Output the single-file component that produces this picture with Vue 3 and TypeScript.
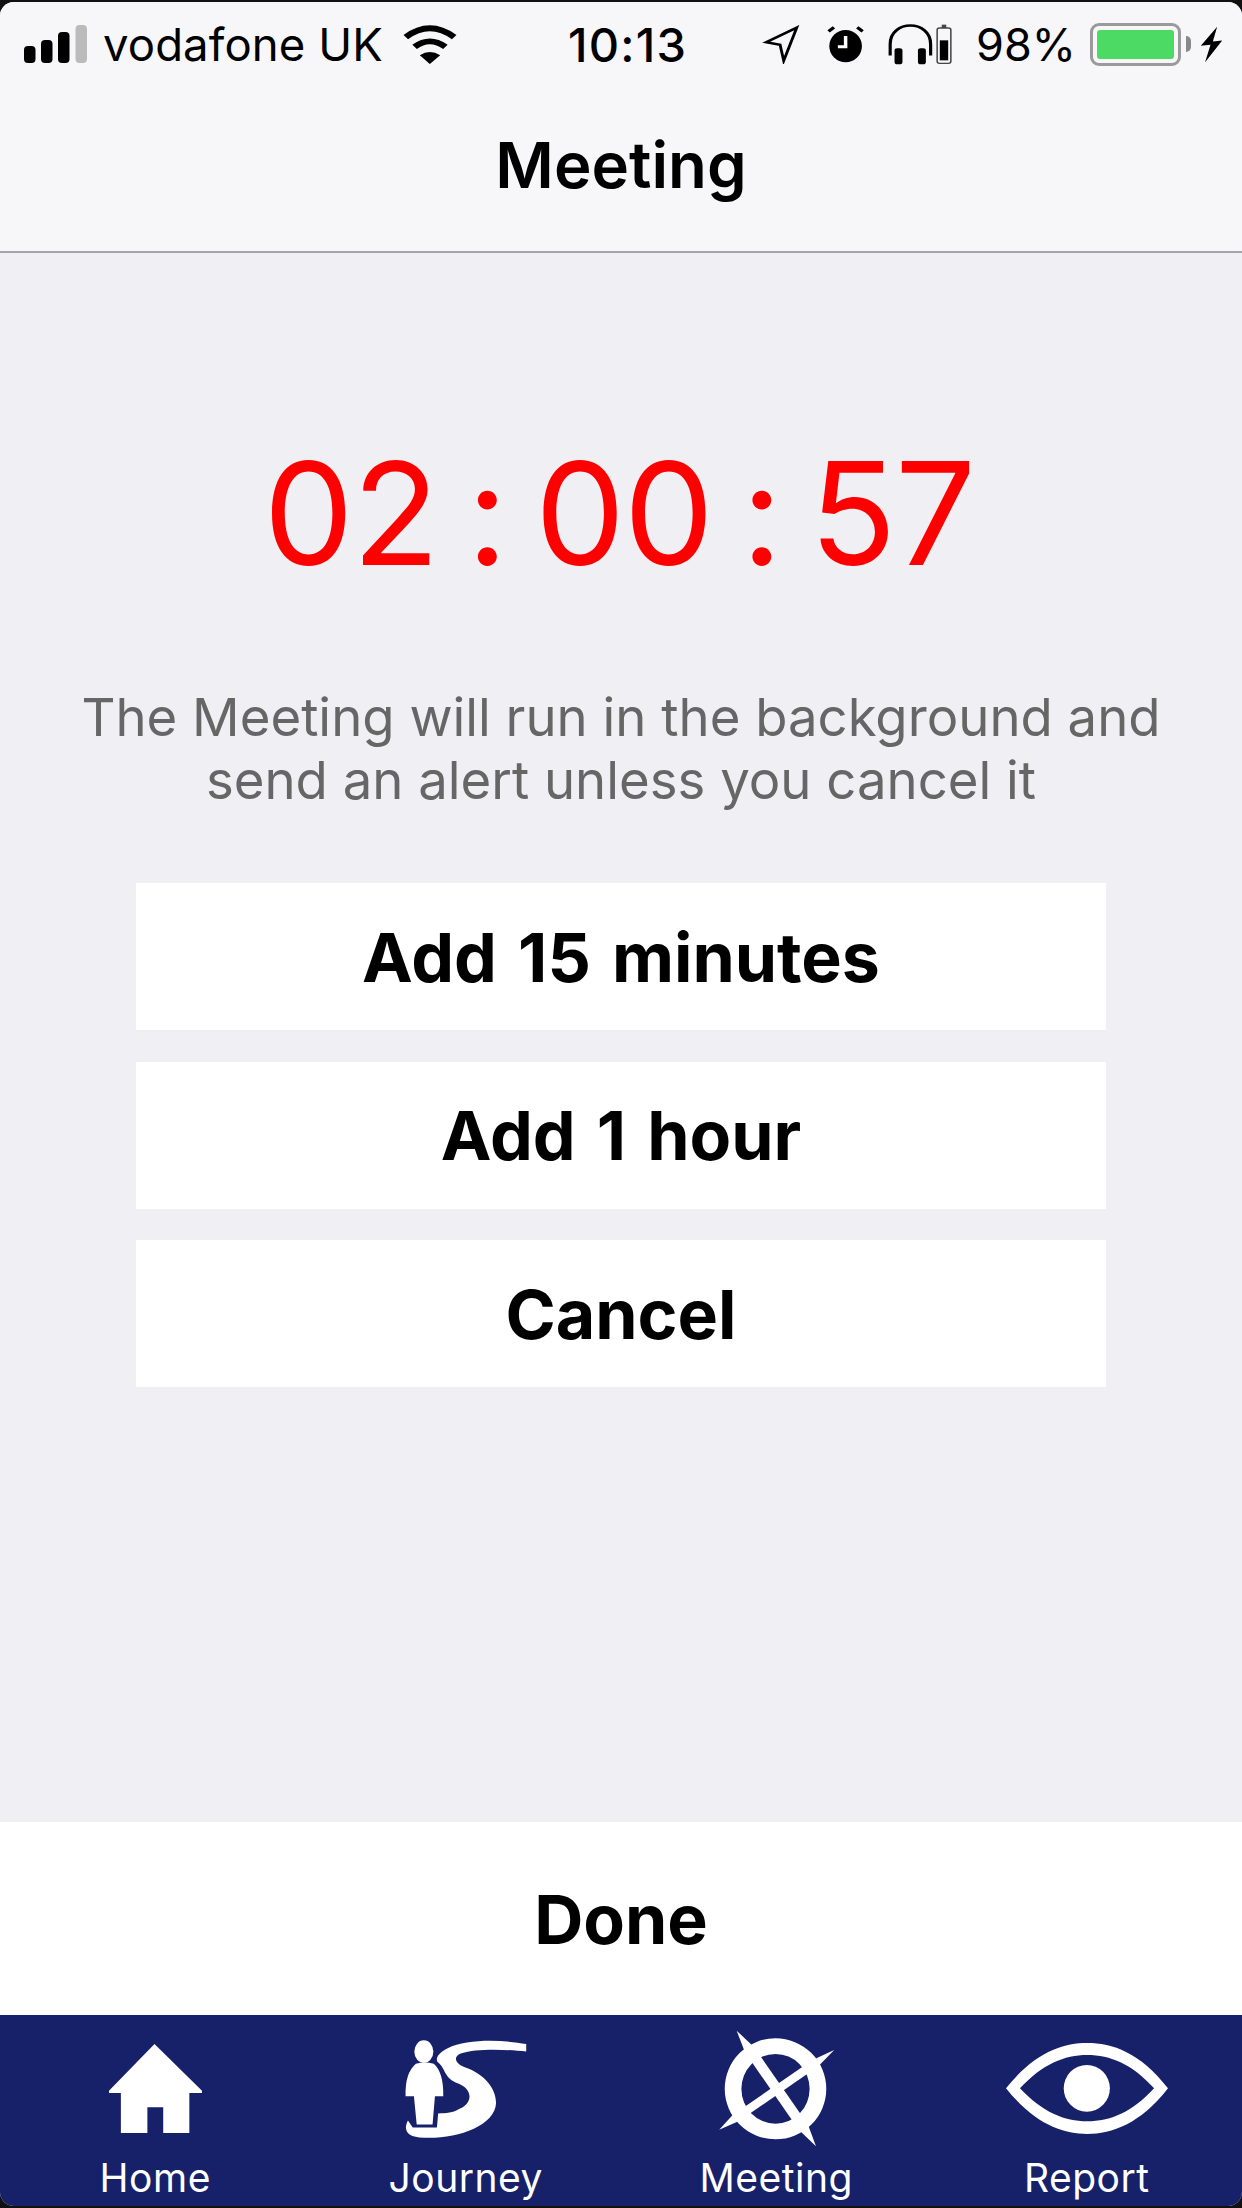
<template>
  <div class="screen">
    <header class="top">
      <div class="status-bar">
        <div class="status-left">
          <svg class="signal" viewBox="0 0 63 38" width="63" height="38">
            <rect v-for="bar in signalBars" :key="bar.x" :x="bar.x" :y="bar.y" width="11.5" :height="38 - bar.y" rx="4" :fill="bar.fill" />
          </svg>
          <span class="carrier">vodafone UK</span>
          <svg class="wifi" viewBox="1025 62 135 122" width="54" height="40" preserveAspectRatio="none">
            <path d="M1032 102 Q1092 48 1153 102" fill="none" stroke="#000" stroke-width="17" />
            <path d="M1054 132 Q1092 98 1131 132" fill="none" stroke="#000" stroke-width="17" />
            <path d="M1067 157 Q1092 138 1118 157 L1092 184 Z" />
          </svg>
        </div>
        <span class="clock">10:13</span>
        <div class="status-right">
          <svg class="ic-location" viewBox="360 68 105 118" width="38" height="39" preserveAspectRatio="none">
            <path d="M456 76 L372 120 L410 128 L420 176 Z" fill="none" stroke="#000" stroke-width="8" stroke-linejoin="miter" />
          </svg>
          <svg class="ic-alarm" viewBox="522 68 98 110" width="38" height="37" preserveAspectRatio="none">
            <ellipse cx="570" cy="128" rx="42" ry="48" />
            <path d="M526 84 L540 72 M614 84 L600 72" stroke="#000" stroke-width="9" />
            <path d="M570 98 V130 H550" fill="none" stroke="#fff" stroke-width="9" />
          </svg>
          <svg class="ic-phones" viewBox="672 62 116 122" width="46" height="41" preserveAspectRatio="none">
            <path d="M680 156 V122 C680 48 782 48 782 122 V156" fill="none" stroke="#000" stroke-width="8" />
            <rect x="691" y="134" width="20" height="48" rx="7" />
            <rect x="750" y="134" width="20" height="48" rx="7" />
          </svg>
          <svg class="ic-cell" viewBox="793 63 42 120" width="16" height="40" preserveAspectRatio="none">
            <rect x="796" y="75" width="36" height="106" rx="6" fill="none" stroke="#444" stroke-width="4" />
            <rect x="808" y="65" width="12" height="10" fill="#444" />
            <rect x="803" y="112" width="22" height="60" />
          </svg>
          <span class="percent">98%</span>
          <div class="battery"><div class="battery-fill"></div></div>
          <div class="battery-nub"></div>
          <svg class="ic-bolt" viewBox="1463 68 59 112" width="23" height="37" preserveAspectRatio="none">
            <path d="M1507 70 L1465 128 L1490 125 L1476 178 L1520 112 L1496 115 Z" />
          </svg>
        </div>
      </div>
      <h1 class="title">Meeting</h1>
    </header>

    <main class="content">
      <div class="timer">02 : 00 : 57</div>
      <p class="note">The Meeting will run in the background and<br />send an alert unless you cancel it</p>
      <div class="actions">
        <button v-for="label in actions" :key="label" class="action">{{ label }}</button>
      </div>
    </main>

    <button class="done">Done</button>

    <nav class="tabs">
      <div class="tab">
        <div class="tab-icon">
          <svg viewBox="275 165 235 267" width="93" height="89" preserveAspectRatio="none">
            <path fill="#fff" d="M390 165 L510 305 V312 H478 V432 H412 V355 H372 V432 H305 V312 H275 V305 Z" />
          </svg>
        </div>
        <span>Home</span>
      </div>
      <div class="tab">
        <div class="tab-icon">
          <svg viewBox="1020 150 310 296" width="123" height="98" preserveAspectRatio="none">
            <ellipse cx="1070" cy="185" rx="24" ry="34" fill="#fff" />
            <path fill="#fff" d="M1050 222 Q1072 212 1095 222 Q1120 248 1119 320 H1098 L1092 405 H1052 L1045 320 H1024 Q1022 250 1050 222 Z" />
            <path fill="#fff" d="M1328 162 C1270 150 1180 145 1130 175 C1105 190 1100 205 1104 216 C1125 235 1120 262 1150 278 C1195 295 1195 340 1160 358 C1145 370 1125 372 1106 372 L1103 414 H1042 L1030 393 C1018 420 1025 445 1070 445 C1150 450 1250 410 1252 340 C1252 290 1215 250 1180 235 C1150 225 1140 200 1165 190 C1200 175 1280 178 1328 185 Z" />
          </svg>
        </div>
        <span>Journey</span>
      </div>
      <div class="tab">
        <div class="tab-icon">
          <svg viewBox="245 120 295 352" width="117" height="117" preserveAspectRatio="none">
            <path fill="#fff" fill-rule="evenodd" d="M262 297 A128 152 0 1 0 518 297 A128 152 0 1 0 262 297 Z M304 297 A86 105 0 1 1 476 297 A86 105 0 1 1 304 297 Z" />
            <path fill="#fff" d="M292 122 L337 173 L472 405 L492 470 L448 419 L313 187 Z" />
            <path fill="#fff" d="M538 180 L498 229 L298 394 L248 420 L282 376 L482 211 Z" />
          </svg>
        </div>
        <span>Meeting</span>
      </div>
      <div class="tab">
        <div class="tab-icon">
          <svg viewBox="968 162 407 273" width="162" height="91" preserveAspectRatio="none">
            <path fill="#fff" fill-rule="evenodd" d="M968 298 C1040 190 1110 162 1172 162 C1235 162 1305 190 1375 298 C1305 405 1235 435 1172 435 C1110 435 1040 405 968 298 Z M1003 298 C1060 225 1115 198 1172 198 C1230 198 1285 225 1340 298 C1285 370 1230 397 1172 397 C1115 397 1060 370 1003 298 Z" />
            <ellipse cx="1171" cy="298" rx="58" ry="70" fill="#fff" />
          </svg>
        </div>
        <span>Report</span>
      </div>
    </nav>
  </div>
</template>

<script setup lang="ts">
const signalBars = [
  { x: 0, y: 21, fill: '#000' },
  { x: 17, y: 15, fill: '#000' },
  { x: 34, y: 7, fill: '#000' },
  { x: 51.5, y: 0, fill: '#bbb' },
];

const actions = ['Add 15 minutes', 'Add 1 hour', 'Cancel'];
</script>

<style>
html,
body {
  margin: 0;
  background: #111;
}
</style>

<style scoped>
.screen {
  display: flex;
  flex-direction: column;
  height: 2204px;
  margin-top: 2px;
  border-radius: 14px;
  overflow: hidden;
  background: #efeff4;
  font-family: Inter, "Liberation Sans", sans-serif;
  color: #000;
}

.top {
  height: 251px;
  box-sizing: border-box;
  background: #f7f7fa;
  border-bottom: 2px solid #a6a6aa;
}

.status-bar {
  position: relative;
  display: flex;
  justify-content: space-between;
  align-items: center;
  height: 88px;
  padding: 0 19px 4px 24px;
  box-sizing: border-box;
}

.status-left,
.status-right {
  display: flex;
  align-items: center;
}

.carrier {
  margin-left: 16px;
  font-size: 45.5px;
  letter-spacing: 0.1px;
}

.wifi {
  margin-left: 20px;
}

.clock {
  position: absolute;
  left: 568px;
  font-size: 47px;
  font-weight: 500;
  letter-spacing: 1.2px;
}

.ic-alarm { margin-left: 27px; }
.ic-phones { margin-left: 22px; }
.ic-cell { margin-left: 3px; }

.percent {
  margin-left: 24px;
  font-size: 45px;
}

.battery {
  margin-left: 14px;
  width: 91px;
  height: 43px;
  box-sizing: border-box;
  padding: 4px;
  border: 3px solid #9a9a9c;
  border-radius: 9px;
}

.battery-fill {
  height: 100%;
  border-radius: 3px;
  background: #4cd964;
}

.battery-nub {
  width: 5px;
  height: 16px;
  margin-left: 5px;
  border-radius: 0 8px 8px 0;
  background: #888;
}

.ic-bolt {
  margin-left: 9px;
}

.title {
  margin: 0;
  padding-top: 39px;
  font-size: 63.5px;
  line-height: 72px;
  font-weight: 600;
  text-align: center;
}

.content {
  flex: 1;
  display: flex;
  flex-direction: column;
  align-items: center;
}

.timer {
  margin-top: 175px;
  padding-right: 4px;
  font-size: 143px;
  line-height: 170px;
  font-weight: 400;
  letter-spacing: -1.5px;
  word-spacing: -10px;
  color: #ff0000;
  white-space: nowrap;
}

.note {
  margin: 88px 0 0;
  font-size: 52.7px;
  line-height: 63px;
  color: #666;
  text-align: center;
  white-space: nowrap;
}

.actions {
  display: flex;
  flex-direction: column;
  gap: 31.5px;
  width: 970px;
  margin-top: 71px;
}

.action {
  height: 147px;
  border: none;
  background: #fff;
  font-family: inherit;
  font-size: 68px;
  font-weight: 700;
  word-spacing: 5px;
  color: #000;
}

.done {
  height: 193px;
  border: none;
  background: #fff;
  font-family: inherit;
  font-size: 68px;
  font-weight: 700;
  color: #000;
}

.tabs {
  display: grid;
  grid-template-columns: repeat(4, 1fr);
  height: 191px;
  box-sizing: border-box;
  padding-top: 15px;
  background: #16216a;
  color: #fff;
  text-align: center;
  font-size: 39px;
  line-height: 44px;
  letter-spacing: 0.5px;
}

.tab-icon {
  display: flex;
  justify-content: center;
  align-items: center;
  height: 117px;
  margin-bottom: 9px;
}
</style>
